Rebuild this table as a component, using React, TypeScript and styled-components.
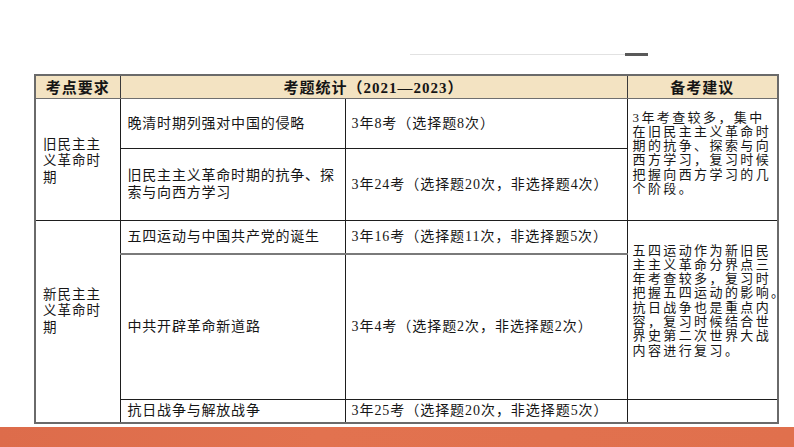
import React from 'react';
import styled, { createGlobalStyle } from 'styled-components';

const GlobalStyle = createGlobalStyle`
  html, body {
    margin: 0;
    padding: 0;
    background: #ffffff;
  }
  body {
    font-family: "Liberation Serif", "Noto Sans CJK SC", serif;
    color: #161616;
  }
`;

const Slide = styled.div`
  width: 794px;
  height: 447px;
  display: flex;
  flex-direction: column;
  overflow: hidden;
  background: #ffffff;
`;

const TitleRule = styled.div`
  height: 74px;
  box-sizing: border-box;
  padding: 53px 0 0 410px;
  display: flex;
  align-items: flex-start;
`;

const RuleLine = styled.div`
  width: 215px;
  height: 1px;
  margin-top: 1px;
  background: #e2e2e2;
`;

const RuleAccent = styled.div`
  width: 23px;
  height: 3px;
  background: #595959;
`;

const TableWrap = styled.div`
  padding-left: 34px;
`;

const Table = styled.table`
  width: 743px;
  border-collapse: collapse;
  table-layout: fixed;
  border: 2px solid #6a6a6a;
  font-size: 14px;
`;

const Row = styled.tr<{ $h: number }>`
  height: ${({ $h }) => $h}px;
`;

const HeadCell = styled.th`
  background: #f3e3c2;
  border: 1px solid #3a3a3a;
  border-bottom: 1px solid #6f6f6f;
  padding: 0;
  font-size: 15px;
  font-weight: 700;
  letter-spacing: 1px;
  text-align: center;
  vertical-align: middle;
  white-space: nowrap;
  color: #151515;
`;

const PeriodCell = styled.td<{ $padTop: number }>`
  border: 1px solid #1e1e1e;
  border-left: 2px solid #6a6a6a;
  padding: ${({ $padTop }) => $padTop}px 0 0 7px;
  vertical-align: top;
  font-size: 13.5px;
  line-height: 16.7px;
  letter-spacing: 1px;
  white-space: nowrap;
`;

const TopicCell = styled.td<{ $thick?: boolean }>`
  border: 1px solid #1e1e1e;
  border-top: ${({ $thick }) => ($thick ? '2px solid #7a7a7a' : '1px solid #1e1e1e')};
  padding: 0 0 0 7px;
  vertical-align: middle;
  line-height: 17px;
  letter-spacing: 0.8px;
  white-space: nowrap;
`;

const StatCell = styled(TopicCell)`
  padding-left: 6px;
  letter-spacing: 0.95px;
`;

const AdviceCell = styled.td<{ $padTop: number }>`
  border: 1px solid #1e1e1e;
  border-right: 2px solid #6a6a6a;
  padding: ${({ $padTop }) => $padTop}px 0 0 5px;
  vertical-align: top;
  font-size: 13px;
  line-height: 14.3px;
  letter-spacing: 2.4px;
  white-space: nowrap;
`;

const FootBar = styled.div`
  margin-top: auto;
  height: 20px;
  background: linear-gradient(90deg, #dd6c4b 0%, #e2724f 40%, #e0704d 100%);
`;

const lines = (text: string[]) =>
  text.map((t, i) => (
    <React.Fragment key={i}>
      {t}
      {i < text.length - 1 && <br />}
    </React.Fragment>
  ));

export default function App() {
  return (
    <Slide>
      <GlobalStyle />
      <TitleRule>
        <RuleLine />
        <RuleAccent />
      </TitleRule>
      <TableWrap>
        <Table>
          <colgroup>
            <col style={{ width: 85 }} />
            <col style={{ width: 225 }} />
            <col style={{ width: 282 }} />
            <col style={{ width: 151 }} />
          </colgroup>
          <tbody>
            <Row $h={23}>
              <HeadCell>考点要求</HeadCell>
              <HeadCell colSpan={2}>考题统计（2021—2023）</HeadCell>
              <HeadCell>备考建议</HeadCell>
            </Row>
            <Row $h={50}>
              <PeriodCell rowSpan={2} $padTop={38}>
                {lines(['旧民主主', '义革命时', '期'])}
              </PeriodCell>
              <TopicCell>晚清时期列强对中国的侵略</TopicCell>
              <StatCell>3年8考（选择题8次）</StatCell>
              <AdviceCell rowSpan={2} $padTop={12}>
                {lines([
                  '3年考查较多，集中',
                  '在旧民主主义革命时',
                  '期的抗争、探索与向',
                  '西方学习，复习时候',
                  '把握向西方学习的几',
                  '个阶段。',
                ])}
              </AdviceCell>
            </Row>
            <Row $h={72}>
              <TopicCell>{lines(['旧民主主义革命时期的抗争、探', '索与向西方学习'])}</TopicCell>
              <StatCell>3年24考（选择题20次，非选择题4次）</StatCell>
            </Row>
            <Row $h={34}>
              <PeriodCell rowSpan={3} $padTop={66}>
                {lines(['新民主主', '义革命时', '期'])}
              </PeriodCell>
              <TopicCell>五四运动与中国共产党的诞生</TopicCell>
              <StatCell>3年16考（选择题11次，非选择题5次）</StatCell>
              <AdviceCell rowSpan={2} $padTop={23}>
                {lines([
                  '五四运动作为新旧民',
                  '主主义革命分界点三',
                  '年考查较多，复习时',
                  '把握五四运动的影响。',
                  '抗日战争也是重点内',
                  '容，复习时候结合世',
                  '界史第二次世界大战',
                  '内容进行复习。',
                ])}
              </AdviceCell>
            </Row>
            <Row $h={145}>
              <TopicCell $thick>中共开辟革命新道路</TopicCell>
              <StatCell $thick>3年4考（选择题2次，非选择题2次）</StatCell>
            </Row>
            <Row $h={24}>
              <TopicCell>抗日战争与解放战争</TopicCell>
              <StatCell>3年25考（选择题20次，非选择题5次）</StatCell>
              <AdviceCell $padTop={0} />
            </Row>
          </tbody>
        </Table>
      </TableWrap>
      <FootBar />
    </Slide>
  );
}
